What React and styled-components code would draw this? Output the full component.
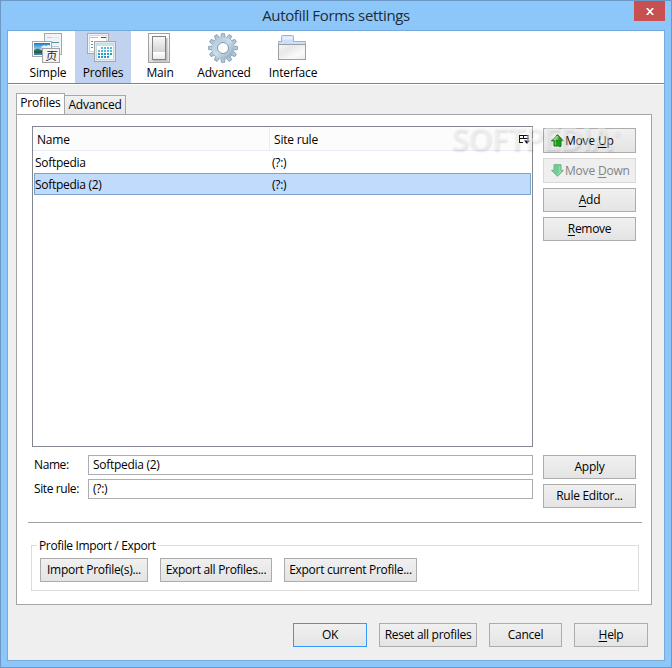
import styled, { createGlobalStyle } from "styled-components";

const toolbar = [
  { name: "Simple", width: 54, icon: <SimpleIcon /> },
  { name: "Profiles", width: 56, icon: <ProfilesIcon />, active: true },
  { name: "Main", width: 58, icon: <MainIcon /> },
  { name: "Advanced", width: 70, icon: <GearIcon /> },
  { name: "Interface", width: 68, icon: <FolderIcon /> },
];

const profiles = [
  { name: "Softpedia", rule: "(?:)" },
  { name: "Softpedia (2)", rule: "(?:)", selected: true },
];

const App = () => {
  return (
    <Window>
      <GlobalStyle />
      <TitleBar>
        <Title>Autofill Forms settings</Title>
        <Close>
          <svg width="8" height="7" viewBox="0 0 8 7">
            <path d="M.8 0 7.2 7M7.2 0 .8 7" stroke="#fff" strokeWidth="1.7" />
          </svg>
        </Close>
      </TitleBar>
      <Content>
        <Toolbar>
          {toolbar.map((el) => (
            <Tool key={el.name} $width={el.width} $active={el.active}>
              {el.icon}
              <span>{el.name}</span>
            </Tool>
          ))}
        </Toolbar>
        <Tabs>
          <Tab $active>Profiles</Tab>
          <Tab>Advanced</Tab>
        </Tabs>
        <Panel>
          <Columns>
            <Tree>
              <TreeHead>
                <HeadCell $width={237}>Name</HeadCell>
                <HeadCell>Site rule</HeadCell>
                <Picker />
              </TreeHead>
              {profiles.map((el) => (
                <TreeRow key={el.name} $selected={el.selected}>
                  <Cell>{el.name}</Cell>
                  <span>{el.rule}</span>
                </TreeRow>
              ))}
            </Tree>
            <Side>
              <Button $height={25} $left>
                <Arrow />
                <span>
                  Move <Key>U</Key>p
                </span>
              </Button>
              <Button $height={25} $left $disabled>
                <Arrow down />
                <span>
                  Move <Key>D</Key>own
                </span>
              </Button>
              <Button>
                <span>
                  <Key>A</Key>dd
                </span>
              </Button>
              <Button>
                <span>
                  <Key>R</Key>emove
                </span>
              </Button>
            </Side>
          </Columns>
          <Columns $top={8}>
            <Fields>
              <Field>
                <label>Name:</label>
                <Input>Softpedia (2)</Input>
              </Field>
              <Field>
                <label>Site rule:</label>
                <Input>(?:)</Input>
              </Field>
            </Fields>
            <Side $top={0}>
              <Button>Apply</Button>
              <Button>Rule Editor...</Button>
            </Side>
          </Columns>
          <Separator />
          <Group>
            <Legend>Profile Import / Export</Legend>
            <Button $width={108}>Import Profile(s)...</Button>
            <Button $width={112}>Export all Profiles...</Button>
            <Button $width={133}>Export current Profile...</Button>
          </Group>
        </Panel>
        <Footer>
          <Button $width={74} $primary>
            OK
          </Button>
          <Button $width={98}>Reset all profiles</Button>
          <Button $width={73}>Cancel</Button>
          <Button $width={74}>
            <span>
              <Key>H</Key>elp
            </span>
          </Button>
        </Footer>
      </Content>
      <Watermark>
        SOFTPEDIA<sup>®</sup>
      </Watermark>
    </Window>
  );
};

function SimpleIcon() {
  return (
    <svg width="30" height="30" viewBox="0 0 30 30">
      <defs>
        <linearGradient id="sky" x2="0" y2="1">
          <stop offset="0" stopColor="#1479c4" />
          <stop offset=".6" stopColor="#b5e4f6" />
          <stop offset=".7" stopColor="#28574c" />
          <stop offset="1" stopColor="#2c96c9" />
        </linearGradient>
      </defs>
      <rect x="12.5" y=".5" width="17" height="21" fill="#f1f4f6" stroke="#a5a8aa" />
      <path d="M15 4.5h5M15 13.5h12M20 17.5h7" stroke="#c4cdd2" />
      <path d="M16 9.5h11" stroke="#4b969f" />
      <path d="M21 4.5h6" stroke="#dce3e7" />
      <rect x=".5" y="8.5" width="19" height="15" fill="#fff" stroke="#a5a8aa" />
      <rect x="2" y="10" width="16" height="12" fill="url(#sky)" />
      <path d="M9 14q3-3 5-1 3-2 4 0v3l-5 1z" fill="#e3f6fb" />
      <path d="M2 17q4-3 7 0l9 1v2H2z" fill="#285d43" opacity=".8" />
      <rect x="10.5" y="15.5" width="17" height="14" fill="#f4f4f4" stroke="#a2a2a2" />
      <text x="13.5" y="27" fontSize="11.5" fontFamily="'Noto Sans CJK SC', sans-serif" fill="#222" transform="skewX(-8) translate(3.5 0)">
        页
      </text>
    </svg>
  );
}

function ProfilesIcon() {
  const cells = [];
  for (let r = 0; r < 4; r++) {
    for (let c = 0; c < 5; c++) {
      if (!(r === 0 && c === 0) && !(r === 3 && c > 3)) cells.push([c, r]);
    }
  }
  return (
    <svg width="30" height="30" viewBox="0 0 30 30">
      <rect x=".5" y=".5" width="21" height="20" fill="#f0f1f2" stroke="#a7a9ab" />
      <rect x="2.5" y="2.5" width="17" height="16" fill="#fff" stroke="#d5d8db" />
      <path d="M3 4.5h8" stroke="#b6c3d2" />
      <path d="M14 4.5h5" stroke="#444d5b" />
      <path d="M4 8.5h3M4 11.5h3M4 14.5h3" stroke="#5b93b4" strokeDasharray="2 1" />
      <rect x="7.5" y="8.5" width="21" height="20" fill="#e7eaec" stroke="#a4a6a8" />
      <rect x="9.5" y="10.5" width="17" height="16" fill="#fff" stroke="#cbd9df" />
      <path d="M10 12h16" stroke="#c0e6ef" strokeWidth="2" />
      {cells.map(([c, r]) => (
        <rect
          key={`${c}-${r}`}
          x={11 + c * 3}
          y={14 + r * 3}
          width="2"
          height="2"
          fill={r < 2 ? "#5bb9db" : "#239bc9"}
        />
      ))}
    </svg>
  );
}

function MainIcon() {
  return (
    <svg width="30" height="30" viewBox="0 0 30 30">
      <defs>
        <linearGradient id="plate" x2="0" y2="1">
          <stop offset="0" stopColor="#fff" />
          <stop offset="1" stopColor="#d9d9d9" />
        </linearGradient>
        <linearGradient id="lever" x2="0" y2="1">
          <stop offset="0" stopColor="#fafafa" />
          <stop offset=".68" stopColor="#d2d2d2" />
          <stop offset=".69" stopColor="#fff" />
          <stop offset="1" stopColor="#e6e6e6" />
        </linearGradient>
      </defs>
      <rect x="4.5" y=".5" width="21" height="29" fill="url(#plate)" stroke="#a3a3a3" />
      <path d="M9 27.5h13.5V5" fill="none" stroke="#bbb" strokeWidth="2" />
      <rect x="8.5" y="3.5" width="13" height="23" fill="url(#lever)" stroke="#818181" />
    </svg>
  );
}

function GearIcon() {
  const teeth = Array.from({ length: 12 }, (_, i) => i * 30);
  return (
    <svg width="30" height="30" viewBox="0 0 30 30">
      <defs>
        <linearGradient id="steel" x2="1" y2="1">
          <stop offset="0" stopColor="#b5cbdc" />
          <stop offset=".5" stopColor="#cfe0eb" />
          <stop offset="1" stopColor="#91adc4" />
        </linearGradient>
      </defs>
      {teeth.map((a) => (
        <path
          key={a}
          d="M12.7 5 13.5 .4h3L17.3 5z"
          fill="#afc7d9"
          stroke="#7893a9"
          strokeWidth=".7"
          transform={`rotate(${a} 15 15)`}
        />
      ))}
      <circle cx="15" cy="15" r="8.2" fill="none" stroke="url(#steel)" strokeWidth="5.5" />
      <circle cx="15" cy="15" r="7.6" fill="none" stroke="#b9cfde" strokeWidth=".8" />
      <circle cx="15" cy="15" r="5.5" fill="#fff" stroke="#7d98ae" />
    </svg>
  );
}

function FolderIcon() {
  return (
    <svg width="30" height="30" viewBox="0 0 30 30">
      <defs>
        <linearGradient id="folder" x2="1" y2="1">
          <stop offset="0" stopColor="#f6f6f6" />
          <stop offset=".35" stopColor="#e8e8e8" />
          <stop offset=".7" stopColor="#fafafa" />
          <stop offset="1" stopColor="#e9e9e9" />
        </linearGradient>
      </defs>
      <path d="M1.5 11V8.500h3v-5q0-1 1-1h10q1 0 1 1v5h12V11" fill="#cbdffa" stroke="#a9b0bb" />
      <path d="M5.5 5h10" stroke="#e4effc" strokeWidth="3" />
      <rect x="1.5" y="11.5" width="27" height="15" fill="url(#folder)" stroke="#9a9ea5" />
    </svg>
  );
}

const Picker = () => (
  <svg width="11" height="11" viewBox="0 0 11 11">
    <path d="M.5 8.500V1.500h8.500V6M0 1.500h9.500M0 4.500h9.500M4.500 2v3M0 8.500h4" fill="none" stroke="#111" />
    <path d="M5 6.500h6L8 10z" fill="#111" />
  </svg>
);

const Arrow = ({ down }) => (
  <svg width="13" height="13" viewBox="0 0 13 13" opacity={down ? 0.75 : 1}>
    <g transform={down ? "rotate(180 6.5 6.5)" : undefined}>
      <path
        d="M6.5 .7 12.4 6.700H10V12.300H3V6.700H.6z"
        fill={down ? "#48c27c" : "#1ca11f"}
        stroke={down ? "#4a9d63" : "#167326"}
        strokeLinejoin="round"
      />
      <path d="M6.5 2.500 2.900 5.900H4.300v5" fill="none" stroke="#9ee891" opacity=".8" />
    </g>
  </svg>
);

const GlobalStyle = createGlobalStyle`
  body {
    margin: 0;
    overflow: hidden;
  }

  * {
    box-sizing: border-box;
  }
`;

const Window = styled.div`
  position: relative;
  width: 672px;
  height: 668px;
  padding: 0 6px;
  border: 1px solid #6b98c4;
  background: #8dc7fa;
  color: #000;
  font: 12px/16px "Open Sans", "Noto Sans", sans-serif;
  letter-spacing: -0.29px;
  white-space: nowrap;
`;

const TitleBar = styled.div`
  display: flex;
  height: 29px;
`;

const Title = styled.div`
  flex: 1;
  padding: 4px 0 0 31px;
  color: #222b35;
  font-size: 15px;
  line-height: 20px;
  letter-spacing: -0.35px;
  text-align: center;
`;

const Close = styled.div`
  display: flex;
  align-items: center;
  justify-content: center;
  width: 31px;
  height: 20px;
  background: #c75050;
`;

const Content = styled.div`
  width: 658px;
  height: 631px;
  border: 1px solid #76a9dc;
  background: #efefef;
`;

const Toolbar = styled.div`
  display: flex;
  height: 53px;
  padding-left: 13px;
  border-bottom: 1px solid #828282;
  background: #fff;
`;

const Tool = styled.div`
  display: flex;
  flex-direction: column;
  align-items: center;
  width: ${(props) => props.$width}px;
  padding-top: 2px;
  background: ${(props) => (props.$active ? "#c1d2ee" : "#fff")};

  svg {
    margin-right: 2px;
  }

  span {
    margin-top: 2px;
    letter-spacing: -0.15px;
  }
`;

const Tabs = styled.div`
  display: flex;
  align-items: flex-end;
  height: 30px;
  padding-left: 8px;
  border-top: 1px solid #fff;
`;

const Tab = styled.div`
  width: ${(props) => (props.$active ? 49 : 61)}px;
  height: ${(props) => (props.$active ? 21 : 19)}px;
  padding-top: 1px;
  border: 1px solid #a5a7aa;
  border-left-width: ${(props) => (props.$active ? 1 : 0)}px;
  border-bottom: 0;
  background: ${(props) => (props.$active ? "#fff" : "linear-gradient(#f1f1f1, #e6e6e6)")};
  letter-spacing: -0.2px;
  text-align: center;
`;

const Panel = styled.div`
  width: 636px;
  height: 491px;
  margin-left: 8px;
  padding: 11px 9px 0 15px;
  border: 1px solid #a5a5a5;
  background: #fff;
`;

const Columns = styled.div`
  display: flex;
  gap: 10px;
  padding-top: ${(props) => props.$top || 0}px;
`;

const Tree = styled.div`
  width: 501px;
  height: 321px;
  border: 1px solid #828790;
`;

const TreeHead = styled.div`
  display: flex;
  height: 24px;
  margin-bottom: 1px;
  border-bottom: 1px solid #e7edf5;
  background: #fcfcfc;
  letter-spacing: -0.2px;

  svg {
    margin: 7px 2px 0 auto;
  }
`;

const HeadCell = styled.div`
  width: ${(props) => (props.$width ? `${props.$width}px` : "auto")};
  padding: 5px 0 0 4px;
  border-right: ${(props) => (props.$width ? "1px solid #e7edf5" : "0")};
`;

const TreeRow = styled.div`
  display: flex;
  align-items: center;
  height: ${(props) => (props.$selected ? 22 : 21)}px;
  margin: 0 1px;
  padding-top: ${(props) => (props.$selected ? 2 : 0)}px;
  border: ${(props) => (props.$selected ? "1px solid #7da2ce" : "1px solid transparent")};
  background: ${(props) => (props.$selected ? "#c1dbfc" : "#fff")};
`;

const Cell = styled.div`
  width: 237px;
`;

const Side = styled.div`
  display: flex;
  flex-direction: column;
  gap: 5px;
  width: 93px;
  padding-top: ${(props) => props.$top ?? 2}px;
`;

const Button = styled.div`
  display: flex;
  align-items: center;
  justify-content: ${(props) => (props.$left ? "flex-start" : "center")};
  gap: 1px;
  width: ${(props) => props.$width || 93}px;
  height: ${(props) => props.$height || 24}px;
  padding-left: ${(props) => (props.$left ? 7 : 0)}px;
  border: 1px solid ${(props) => (props.$primary ? "#3399ff" : props.$disabled ? "#d9d9d9" : "#acacac")};
  background: ${(props) => (props.$disabled ? "#efefef" : "linear-gradient(#f0f0f0, #e4e4e4)")};
  color: ${(props) => (props.$disabled ? "#838383" : "#000")};
  letter-spacing: ${(props) => (props.$left ? -0.2 : -0.29)}px;
`;

const Key = styled.span`
  text-decoration: underline;
  text-underline-offset: 2px;
`;

const Fields = styled.div`
  display: flex;
  flex-direction: column;
  gap: 4px;
  width: 501px;
`;

const Field = styled.div`
  display: flex;
  align-items: center;
  height: 20px;

  label {
    width: 56px;
    padding-left: 2px;
    letter-spacing: -0.4px;
  }
`;

const Input = styled.div`
  width: 445px;
  height: 20px;
  padding: 1px 4px;
  border: 1px solid #abadb3;
`;

const Separator = styled.div`
  width: 614px;
  height: 1px;
  margin: 14px 0 0 -4px;
  background: #a0a0a0;
`;

const Group = styled.div`
  position: relative;
  display: flex;
  gap: 12px;
  width: 608px;
  height: 46px;
  margin: 22px 0 0 -1px;
  padding: 12px 8px;
  border: 1px solid #dcdcdc;
`;

const Legend = styled.div`
  position: absolute;
  top: -8px;
  left: 5px;
  padding: 0 2px;
  background: #fff;
  letter-spacing: -0.35px;
`;

const Footer = styled.div`
  display: flex;
  justify-content: flex-end;
  gap: 12px;
  padding: 18px 16px 0 0;
`;

const Watermark = styled.div`
  position: absolute;
  top: 119px;
  left: 450px;
  color: rgba(255, 255, 255, 0.4);
  font: bold 32px/36px "Open Sans", sans-serif;
  letter-spacing: -1.5px;
  text-shadow: 1px 2px 2px rgba(0, 0, 0, 0.1);
  pointer-events: none;

  sup {
    margin-left: 2px;
    font-size: 9px;
    line-height: 9px;
    vertical-align: 14px;
  }
`;

export default App;
